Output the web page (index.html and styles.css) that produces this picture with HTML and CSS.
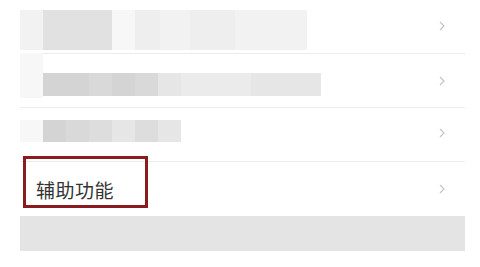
FILE: index.html
```html
<!DOCTYPE html>
<html lang="zh">
<head>
<meta charset="utf-8">
<link rel="stylesheet" href="styles.css">
</head>
<body>
<div class="list">
  <div class="row r1">
    <div class="mosaic m1">
      <span class="c w23 s1"></span>
      <span class="c w69 s5"></span>
      <span class="c w23 s0"></span>
      <span class="c w25 s2"></span>
      <span class="c w30 s1"></span>
      <span class="c w45 s2"></span>
      <span class="c w72 s1"></span>
    </div>
    <svg class="chev" width="6" height="10" viewBox="0 0 6 10"><polyline points="1,1 5,5 1,9" fill="none" stroke="#c4c4c4" stroke-width="1.2"/></svg>
  </div>
  <div class="row r2">
    <div class="mosaic m2">
      <span class="c w23 s0 tall"></span>
      <span class="c w46 s8"></span>
      <span class="c w23 s7"></span>
      <span class="c w23 s8"></span>
      <span class="c w23 s7"></span>
      <span class="c w23 s4"></span>
      <span class="c w70 s3"></span>
      <span class="c w70 s4"></span>
    </div>
    <svg class="chev" width="6" height="10" viewBox="0 0 6 10"><polyline points="1,1 5,5 1,9" fill="none" stroke="#c4c4c4" stroke-width="1.2"/></svg>
  </div>
  <div class="row r3">
    <div class="mosaic m3">
      <span class="c w23 s0"></span>
      <span class="c w23 s8"></span>
      <span class="c w23 s7"></span>
      <span class="c w23 s6"></span>
      <span class="c w23 s4"></span>
      <span class="c w23 s6"></span>
      <span class="c w23 s4"></span>
    </div>
    <svg class="chev" width="6" height="10" viewBox="0 0 6 10"><polyline points="1,1 5,5 1,9" fill="none" stroke="#c4c4c4" stroke-width="1.2"/></svg>
  </div>
  <div class="row r4">
    <span class="label">辅助功能</span>
    <span class="mark"></span>
    <svg class="chev" width="6" height="10" viewBox="0 0 6 10"><polyline points="1,1 5,5 1,9" fill="none" stroke="#c4c4c4" stroke-width="1.2"/></svg>
  </div>
  <div class="band"></div>
</div>
</body>
</html>
```
FILE: styles.css
```css
html, body {
  margin: 0;
  padding: 0;
  background: #ffffff;
}
body {
  width: 480px;
  height: 267px;
  overflow: hidden;
  font-family: "Noto Sans CJK SC", "Noto Sans", sans-serif;
}
.list {
  margin-left: 20px;
  width: 445px;
}
.row {
  position: relative;
  height: 53px;
  border-bottom: 1px solid #ececec;
  display: flex;
  align-items: center;
  justify-content: space-between;
  padding-right: 20px;
}
.r4 {
  border-bottom: none;
  height: 54px;
}
.mosaic {
  display: flex;
  align-items: center;
}
.m1 { height: 40px; margin-top: 7px; align-items: stretch; }
.m2 { height: 23px; margin-top: 8px; }
.m3 { height: 22px; margin-top: -7px; }
.c { display: block; height: 100%; }
.tall { height: 45px; margin-top: -18px; }
.w23 { width: 23px; }
.w25 { width: 25px; }
.w30 { width: 30px; }
.w45 { width: 45px; }
.w46 { width: 46px; }
.w69 { width: 69px; }
.w70 { width: 70px; }
.w72 { width: 72px; }
.s0 { background: #f7f7f7; }
.s1 { background: #f2f2f2; }
.s2 { background: #eeeeee; }
.s3 { background: #ebebeb; }
.s4 { background: #e6e6e6; }
.s5 { background: #e1e1e1; }
.s6 { background: #dddddd; }
.s7 { background: #d9d9d9; }
.s8 { background: #d4d4d4; }
.chev {
  display: block;
  flex: none;
}
.r1 .chev { margin-top: -1px; }
.r3 .chev { margin-top: -3px; }
.label {
  margin-left: 16px;
  margin-top: 1px;
  font-size: 19px;
  letter-spacing: 0.5px;
  color: #333333;
}
.mark {
  position: absolute;
  left: 3px;
  top: -6px;
  width: 119px;
  height: 46px;
  border: 3px solid #8a1c1f;
}
.band {
  height: 35px;
  background: #e4e4e4;
}
```
